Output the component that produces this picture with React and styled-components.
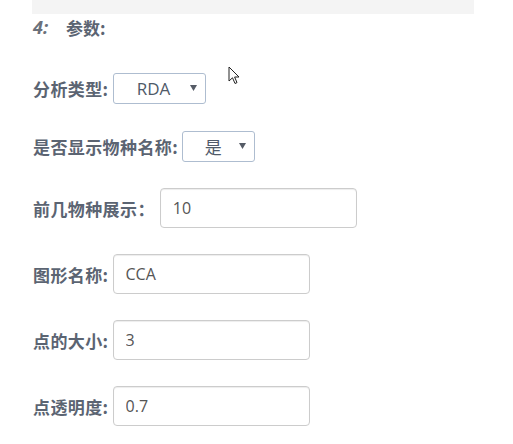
import React from "react";
import styled, { createGlobalStyle } from "styled-components";

const GlobalStyle = createGlobalStyle`
  body {
    margin: 0;
    background: #fff;
    font-family: "Noto Sans CJK SC", "Noto Sans", sans-serif;
  }
`;

const Page = styled.div`
  position: relative;
  width: 513px;
  height: 444px;
  padding-left: 32px;
  box-sizing: border-box;
  overflow: hidden;
`;

const TopBar = styled.div`
  width: 442px;
  height: 14px;
  background: #f4f4f4;
`;

const Title = styled.div`
  display: flex;
  align-items: center;
  height: 26px;
  padding-left: 1px;
  font-size: 17px;
  font-weight: 700;
  color: #5b6472;
`;

const Step = styled.span`
  font-style: italic;
  font-family: "Open Sans", "Noto Sans CJK SC", sans-serif;
  font-size: 18px;
  color: #6b717b;
  width: 33px;
`;

const Row = styled.div`
  display: flex;
  align-items: center;
  height: 40px;
  margin-top: ${(p) => p.$mt}px;
`;

const Label = styled.label`
  padding-left: 1px;
  margin-right: ${(p) => p.$gap || 4}px;
  font-size: 17px;
  font-weight: 700;
  color: #5b6472;
  white-space: nowrap;
  letter-spacing: 0.4px;
`;

const SelectBox = styled.div`
  display: flex;
  align-items: center;
  width: ${(p) => p.$w}px;
  height: ${(p) => p.$h}px;
  box-sizing: border-box;
  border: 1px solid #aebdd0;
  border-radius: 3px;
  background: #fff;
  padding: 0 8px 0 4px;
  color: #4f5a69;
  font-family: "Open Sans", "Noto Sans CJK SC", sans-serif;
  font-size: 17px;
`;

const SelectText = styled.span`
  flex: 1;
  text-align: center;
`;

const Input = styled.input`
  width: ${(p) => p.$w || 197}px;
  height: 40px;
  box-sizing: border-box;
  padding: 0 12px;
  border: 1px solid #cccccc;
  border-radius: 4px;
  box-shadow: inset 0 1px 1px rgba(0, 0, 0, 0.075);
  font-family: "Open Sans", "Noto Sans", sans-serif;
  font-size: 16px;
  color: #555;
  outline: none;
`;

const Cursor = styled.svg`
  position: absolute;
  left: 228px;
  top: 66px;
`;

const Arrow = () => (
  <svg width="7" height="6" viewBox="0 0 7 6">
    <path d="M0 0 L7 0 L3.5 6 Z" fill="#555b66" />
  </svg>
);

const Select = ({ value, w, h }) => (
  <SelectBox $w={w} $h={h}>
    <SelectText>{value}</SelectText>
    <Arrow />
  </SelectBox>
);

export default function App() {
  return (
    <>
      <GlobalStyle />
      <Page>
        <TopBar />
        <Title>
          <Step>4:</Step>
          参数:
        </Title>
        <Row $mt={28}>
          <Label>分析类型:</Label>
          <Select value="RDA" w={93} h={31} />
        </Row>
        <Row $mt={18}>
          <Label>是否显示物种名称:</Label>
          <Select value="是" w={73} h={31} />
        </Row>
        <Row $mt={22}>
          <Label $gap={5}>前几物种展示：</Label>
          <Input defaultValue="10" $w={197} />
        </Row>
        <Row $mt={26}>
          <Label>图形名称:</Label>
          <Input defaultValue="CCA" />
        </Row>
        <Row $mt={26}>
          <Label>点的大小:</Label>
          <Input defaultValue="3" />
        </Row>
        <Row $mt={26}>
          <Label>点透明度:</Label>
          <Input defaultValue="0.7" />
        </Row>
        <Cursor width="13" height="20" viewBox="0 0 13 20">
          <path
            d="M1 1 L1 15 L4.5 11.8 L7 17.5 L9 16.6 L6.6 11 L11 11 Z"
            fill="#fff"
            stroke="#222"
            strokeWidth="1"
            strokeLinejoin="round"
          />
        </Cursor>
      </Page>
    </>
  );
}
